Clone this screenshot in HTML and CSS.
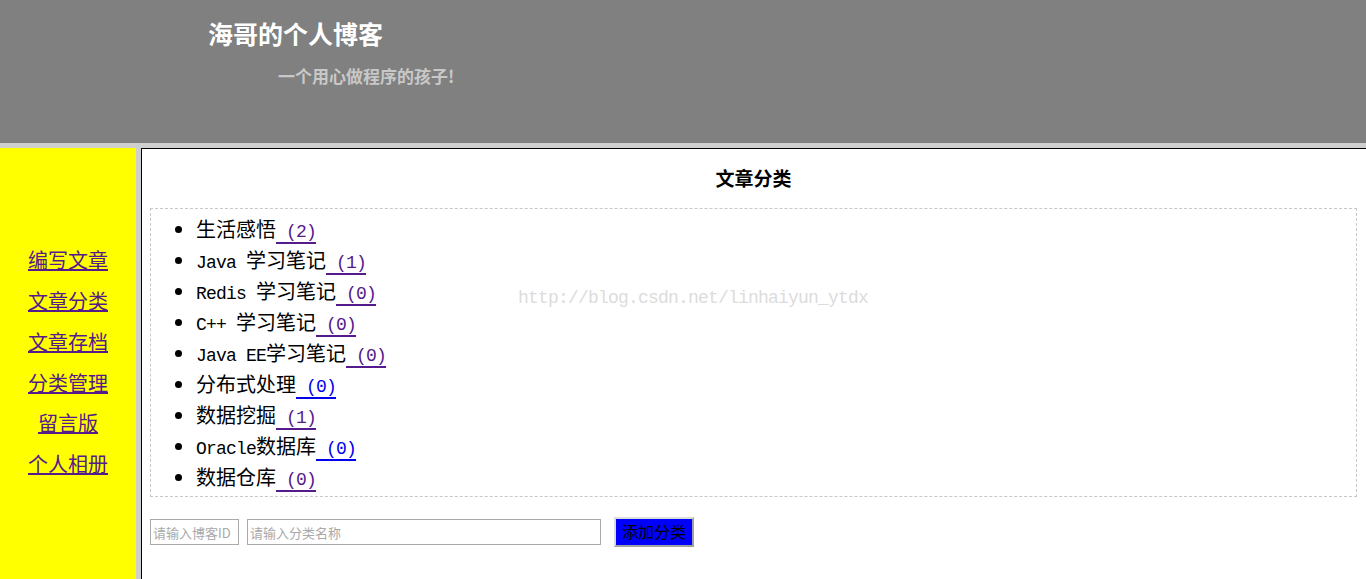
FILE: index.html
```html
<!DOCTYPE html>
<html lang="zh-CN">
<head>
<meta charset="utf-8">
<title>海哥的个人博客</title>
<link rel="stylesheet" href="styles.css">
</head>
<body>
<header class="top">
  <h1 class="title">海哥的个人博客</h1>
  <p class="subtitle">一个用心做程序的孩子!</p>
</header>
<div class="hsep"></div>
<div class="frames">
  <nav class="side">
    <a class="nav-link" href="#">编写文章</a>
    <a class="nav-link" href="#">文章分类</a>
    <a class="nav-link" href="#">文章存档</a>
    <a class="nav-link" href="#">分类管理</a>
    <a class="nav-link" href="#">留言版</a>
    <a class="nav-link" href="#">个人相册</a>
  </nav>
  <div class="vsep"></div>
  <main class="main">
    <h2 class="heading">文章分类</h2>
    <div class="box">
      <ul class="cats">
        <li>生活感悟<a class="cnt" href="#"> (2)</a></li>
        <li><span class="lat">Java </span>学习笔记<a class="cnt" href="#"> (1)</a></li>
        <li><span class="lat">Redis </span>学习笔记<a class="cnt" href="#"> (0)</a></li>
        <li><span class="lat">C++ </span>学习笔记<a class="cnt" href="#"> (0)</a></li>
        <li><span class="lat">Java EE</span>学习笔记<a class="cnt" href="#"> (0)</a></li>
        <li>分布式处理<a class="cnt new" href="#"> (0)</a></li>
        <li>数据挖掘<a class="cnt" href="#"> (1)</a></li>
        <li><span class="lat">Oracle</span>数据库<a class="cnt new" href="#"> (0)</a></li>
        <li>数据仓库<a class="cnt" href="#"> (0)</a></li>
      </ul>
    </div>
    <form class="addform">
      <input class="inp inp-id" type="text" placeholder="请输入博客ID">
      <input class="inp inp-name" type="text" placeholder="请输入分类名称">
      <button class="btn" type="button">添加分类</button>
    </form>
    <div class="watermark">http://blog.csdn.net/linhaiyun_ytdx</div>
  </main>
</div>
</body>
</html>
```
FILE: styles.css
```css
html, body {
  margin: 0;
  padding: 0;
  height: 100%;
  overflow: hidden;
}
body {
  font-family: "Noto Sans CJK SC", "Liberation Serif", serif;
  background: #fff;
}
.top {
  height: 143px;
  background: #808080;
  box-sizing: border-box;
  padding-top: 18px;
}
.title {
  margin: 0 0 0 208px;
  font-size: 25px;
  line-height: 30px;
  font-weight: bold;
  color: #fff;
}
.subtitle {
  margin: 16px 0 0 278px;
  font-size: 17px;
  line-height: 24px;
  font-weight: bold;
  color: #c8c8c8;
}
.hsep {
  height: 5px;
  background: #cfcfcf;
}
.frames {
  display: flex;
  height: 431px;
}
.side {
  width: 136px;
  background: #ffff00;
  display: flex;
  flex-direction: column;
  justify-content: center;
  align-items: center;
  padding-bottom: 2px;
  box-sizing: border-box;
}
.nav-link {
  font-size: 20px;
  line-height: 40.8px;
  color: #551a8b;
  text-decoration: underline;
}
.vsep {
  width: 5px;
  background: #cfcfcf;
}
.main {
  flex: 1;
  position: relative;
  border-left: 1px solid #000;
  border-top: 1px solid #000;
  padding: 0 9px 0 8px;
}
.heading {
  margin: 0;
  padding-top: 16px;
  height: 43px;
  text-align: center;
  font-size: 19px;
  line-height: 26px;
  font-weight: bold;
  color: #000;
  box-sizing: content-box;
}
.box {
  border: 1px dashed #c8c8c8;
}
.cats {
  margin: 0;
  padding: 4px 0 4px 45px;
  list-style: disc;
  font-size: 20px;
  line-height: 31px;
  color: #000;
}
.cats li {
  height: 31px;
  white-space: nowrap;
}
.cats li::marker {
  font-size: 18px;
}
.lat {
  font-family: "Liberation Mono", monospace;
  font-size: 18px;
  letter-spacing: -0.8px;
  line-height: 1;
}
.cnt {
  font-family: "Liberation Mono", monospace;
  font-size: 18px;
  letter-spacing: -0.8px;
  line-height: 1;
  color: #551a8b;
  text-decoration: underline;
  text-decoration-thickness: 2px;
  text-underline-offset: 5px;
  text-decoration-skip-ink: none;
  white-space: pre;
}
.cnt.new {
  color: #0000ee;
}
.addform {
  display: flex;
  align-items: center;
  margin-top: 20px;
}
.inp {
  height: 26px;
  box-sizing: border-box;
  border: 1px solid #a9a9a9;
  padding: 0 2px;
  font-family: "Noto Sans CJK SC", sans-serif;
  font-size: 13px;
  color: #000;
  background: #fff;
  outline: none;
}
.inp::placeholder {
  color: #a9a9a9;
}
.inp-id {
  width: 89px;
  margin-right: 8px;
}
.inp-name {
  width: 354px;
  margin-right: 13px;
}
.btn {
  width: 80px;
  height: 30px;
  box-sizing: border-box;
  background: #0000ff;
  border: 2px solid;
  border-color: #dcdcdc #a0a0a0 #a0a0a0 #dcdcdc;
  padding: 0 0 2px;
  font-family: "Noto Sans CJK SC", sans-serif;
  font-size: 16px;
  line-height: 24px;
  color: #000;
}
.watermark {
  position: absolute;
  left: 376px;
  top: 139px;
  font-family: "Liberation Mono", monospace;
  font-size: 18px;
  letter-spacing: -0.8px;
  color: #dcdcdc;
  pointer-events: none;
}
```
